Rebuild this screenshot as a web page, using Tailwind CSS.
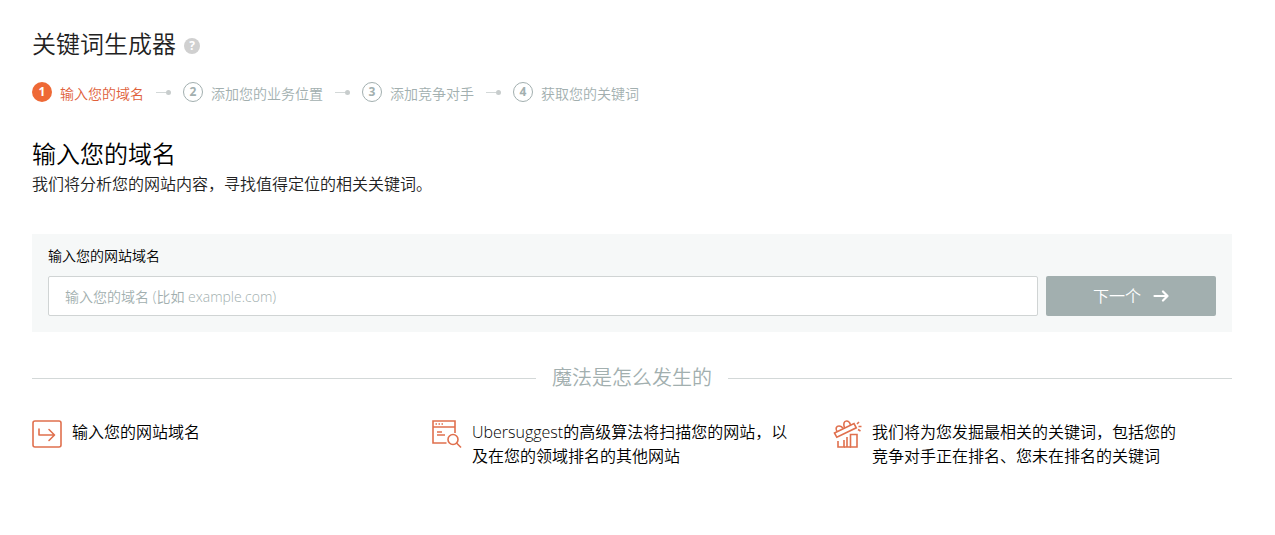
<!DOCTYPE html>
<html lang="zh-CN">
<head>
    <meta charset="UTF-8">
    <meta name="viewport" content="width=device-width, initial-scale=1.0">
    <title>关键词生成器</title>
    <script src="https://cdn.jsdelivr.net/npm/@tailwindcss/browser@4"></script>
</head>
<body class="bg-white font-['Open_Sans','Noto_Sans_CJK_SC',sans-serif] font-[350] text-black">

    <main class="max-w-[1264px] px-8 pt-6 pb-12">
        <header class="flex items-center gap-2">
            <h1 class="text-2xl leading-10 text-[#222]">关键词生成器</h1>
            <button type="button" aria-label="帮助" class="mt-1 flex size-4 items-center justify-center rounded-full bg-[#d0d0d0] text-xs font-bold text-white">?</button>
        </header>

        <!-- Pasos -->
        <ol class="mt-4 flex items-center text-sm leading-6 text-[#a2afaf]">
            <li class="flex items-center gap-2 text-[#e0603a]">
                <span class="flex size-5 items-center justify-center rounded-full bg-[#ee6936] text-xs font-bold text-white">1</span>
                <span class="pt-1 leading-5">输入您的域名</span>
            </li>
            <li aria-hidden="true" class="mx-3 flex w-[15px] items-center">
                <span class="h-px flex-1 bg-[#d3d8d8]"></span>
                <span class="size-[5px] rounded-full bg-[#c8cdcd]"></span>
            </li>
            <li class="flex items-center gap-2">
                <span class="flex size-5 items-center justify-center rounded-full border border-[#a2afaf] text-xs font-bold">2</span>
                <span class="pt-1 leading-5">添加您的业务位置</span>
            </li>
            <li aria-hidden="true" class="mx-3 flex w-[15px] items-center">
                <span class="h-px flex-1 bg-[#d3d8d8]"></span>
                <span class="size-[5px] rounded-full bg-[#c8cdcd]"></span>
            </li>
            <li class="flex items-center gap-2">
                <span class="flex size-5 items-center justify-center rounded-full border border-[#a2afaf] text-xs font-bold">3</span>
                <span class="pt-1 leading-5">添加竞争对手</span>
            </li>
            <li aria-hidden="true" class="mx-3 flex w-[15px] items-center">
                <span class="h-px flex-1 bg-[#d3d8d8]"></span>
                <span class="size-[5px] rounded-full bg-[#c8cdcd]"></span>
            </li>
            <li class="flex items-center gap-2">
                <span class="flex size-5 items-center justify-center rounded-full border border-[#a2afaf] text-xs font-bold">4</span>
                <span class="pt-1 leading-5">获取您的关键词</span>
            </li>
        </ol>

        <h2 class="mt-8 text-2xl leading-9">输入您的域名</h2>
        <p class="text-base leading-6 text-[#222]">我们将分析您的网站内容，寻找值得定位的相关关键词。</p>

        <form class="mt-[38px] bg-[#f6f8f8] px-4 pt-3 pb-4">
            <label for="domain" class="block text-sm leading-5">输入您的网站域名</label>
            <div class="mt-2.5 flex gap-2">
                <input type="text" id="domain" placeholder="输入您的域名 (比如 example.com)" class="h-10 min-w-0 flex-1 rounded-xs border border-[#d0d4d4] bg-white px-4 text-sm placeholder:text-[#a2afaf]">
                <button type="button" class="flex h-10 w-[170px] items-center justify-center gap-3 rounded-xs bg-[#a2afaf] text-base text-white">
                    <span>下一个</span>
                    <svg class="h-3 w-4" viewBox="0 0 16 12" fill="none" stroke="currentColor" stroke-width="2.2" stroke-linecap="round" stroke-linejoin="round">
                        <path d="M1.500 6h13M10 1.500l4.500 4.500-4.500 4.500"/>
                    </svg>
                </button>
            </div>
        </form>

        <div class="mt-8 flex items-center gap-4">
            <span class="h-px flex-1 bg-[#d3d8d8]"></span>
            <h3 class="text-xl leading-7 text-[#a2afaf]">魔法是怎么发生的</h3>
            <span class="h-px flex-1 bg-[#d3d8d8]"></span>
        </div>

        <div class="mt-7 grid grid-cols-3 text-base leading-6">
            <div class="flex gap-2">
                <svg class="size-8 shrink-0" viewBox="0 0 32 32" fill="none" stroke="#e0704e" stroke-width="1.6" stroke-linecap="round" stroke-linejoin="round">
                    <rect x="1" y="1" width="28" height="26" rx="2"/>
                    <path d="M7 9v6h15M17 9.500l5.500 5.500-5.500 5.500"/>
                </svg>
                <p class="max-w-[316px] flex-1">输入您的网站域名</p>
            </div>
            <div class="flex gap-2">
                <svg class="size-8 shrink-0" viewBox="0 0 32 32" fill="none" stroke="#e0704e" stroke-width="1.6">
                    <path d="M14.500 23H1V1h22v12M1 7h22M5 12h5M5 15h8"/>
                    <path d="M3.500 4h1.500M6.500 4h1.500M9.500 4h1.500"/>
                    <circle cx="21" cy="19.500" r="5"/>
                    <path d="M24.500 23l4.500 4.500"/>
                </svg>
                <p class="max-w-[316px] flex-1">Ubersuggest的高级算法将扫描您的网站，以及在您的领域排名的其他网站</p>
            </div>
            <div class="flex gap-2">
                <svg class="size-8 shrink-0" viewBox="0 0 32 32" fill="none" stroke="#e0704e" stroke-width="1.6">
                    <path d="M2.500 13L22 3.500l2.300 4.300L4.800 17.300z"/>
                    <path d="M5 11.500C3 8.500 4.500 6 7 6s3.500 1.500 4 2.500M12.500 8C11 4 12 1 14.500 1s3.500 2 4 4"/>
                    <path d="M6 21v6h6v-7M15 27V17M18.500 27V14.500H25V27z"/>
                    <path d="M12 27h7M25 4l2-2M26.500 6.500h3M26 9.500l2.500 1.500"/>
                </svg>
                <p class="max-w-[316px] flex-1">我们将为您发掘最相关的关键词，包括您的竞争对手正在排名、您未在排名的关键词</p>
            </div>
        </div>
    </main>

</body>
</html>
